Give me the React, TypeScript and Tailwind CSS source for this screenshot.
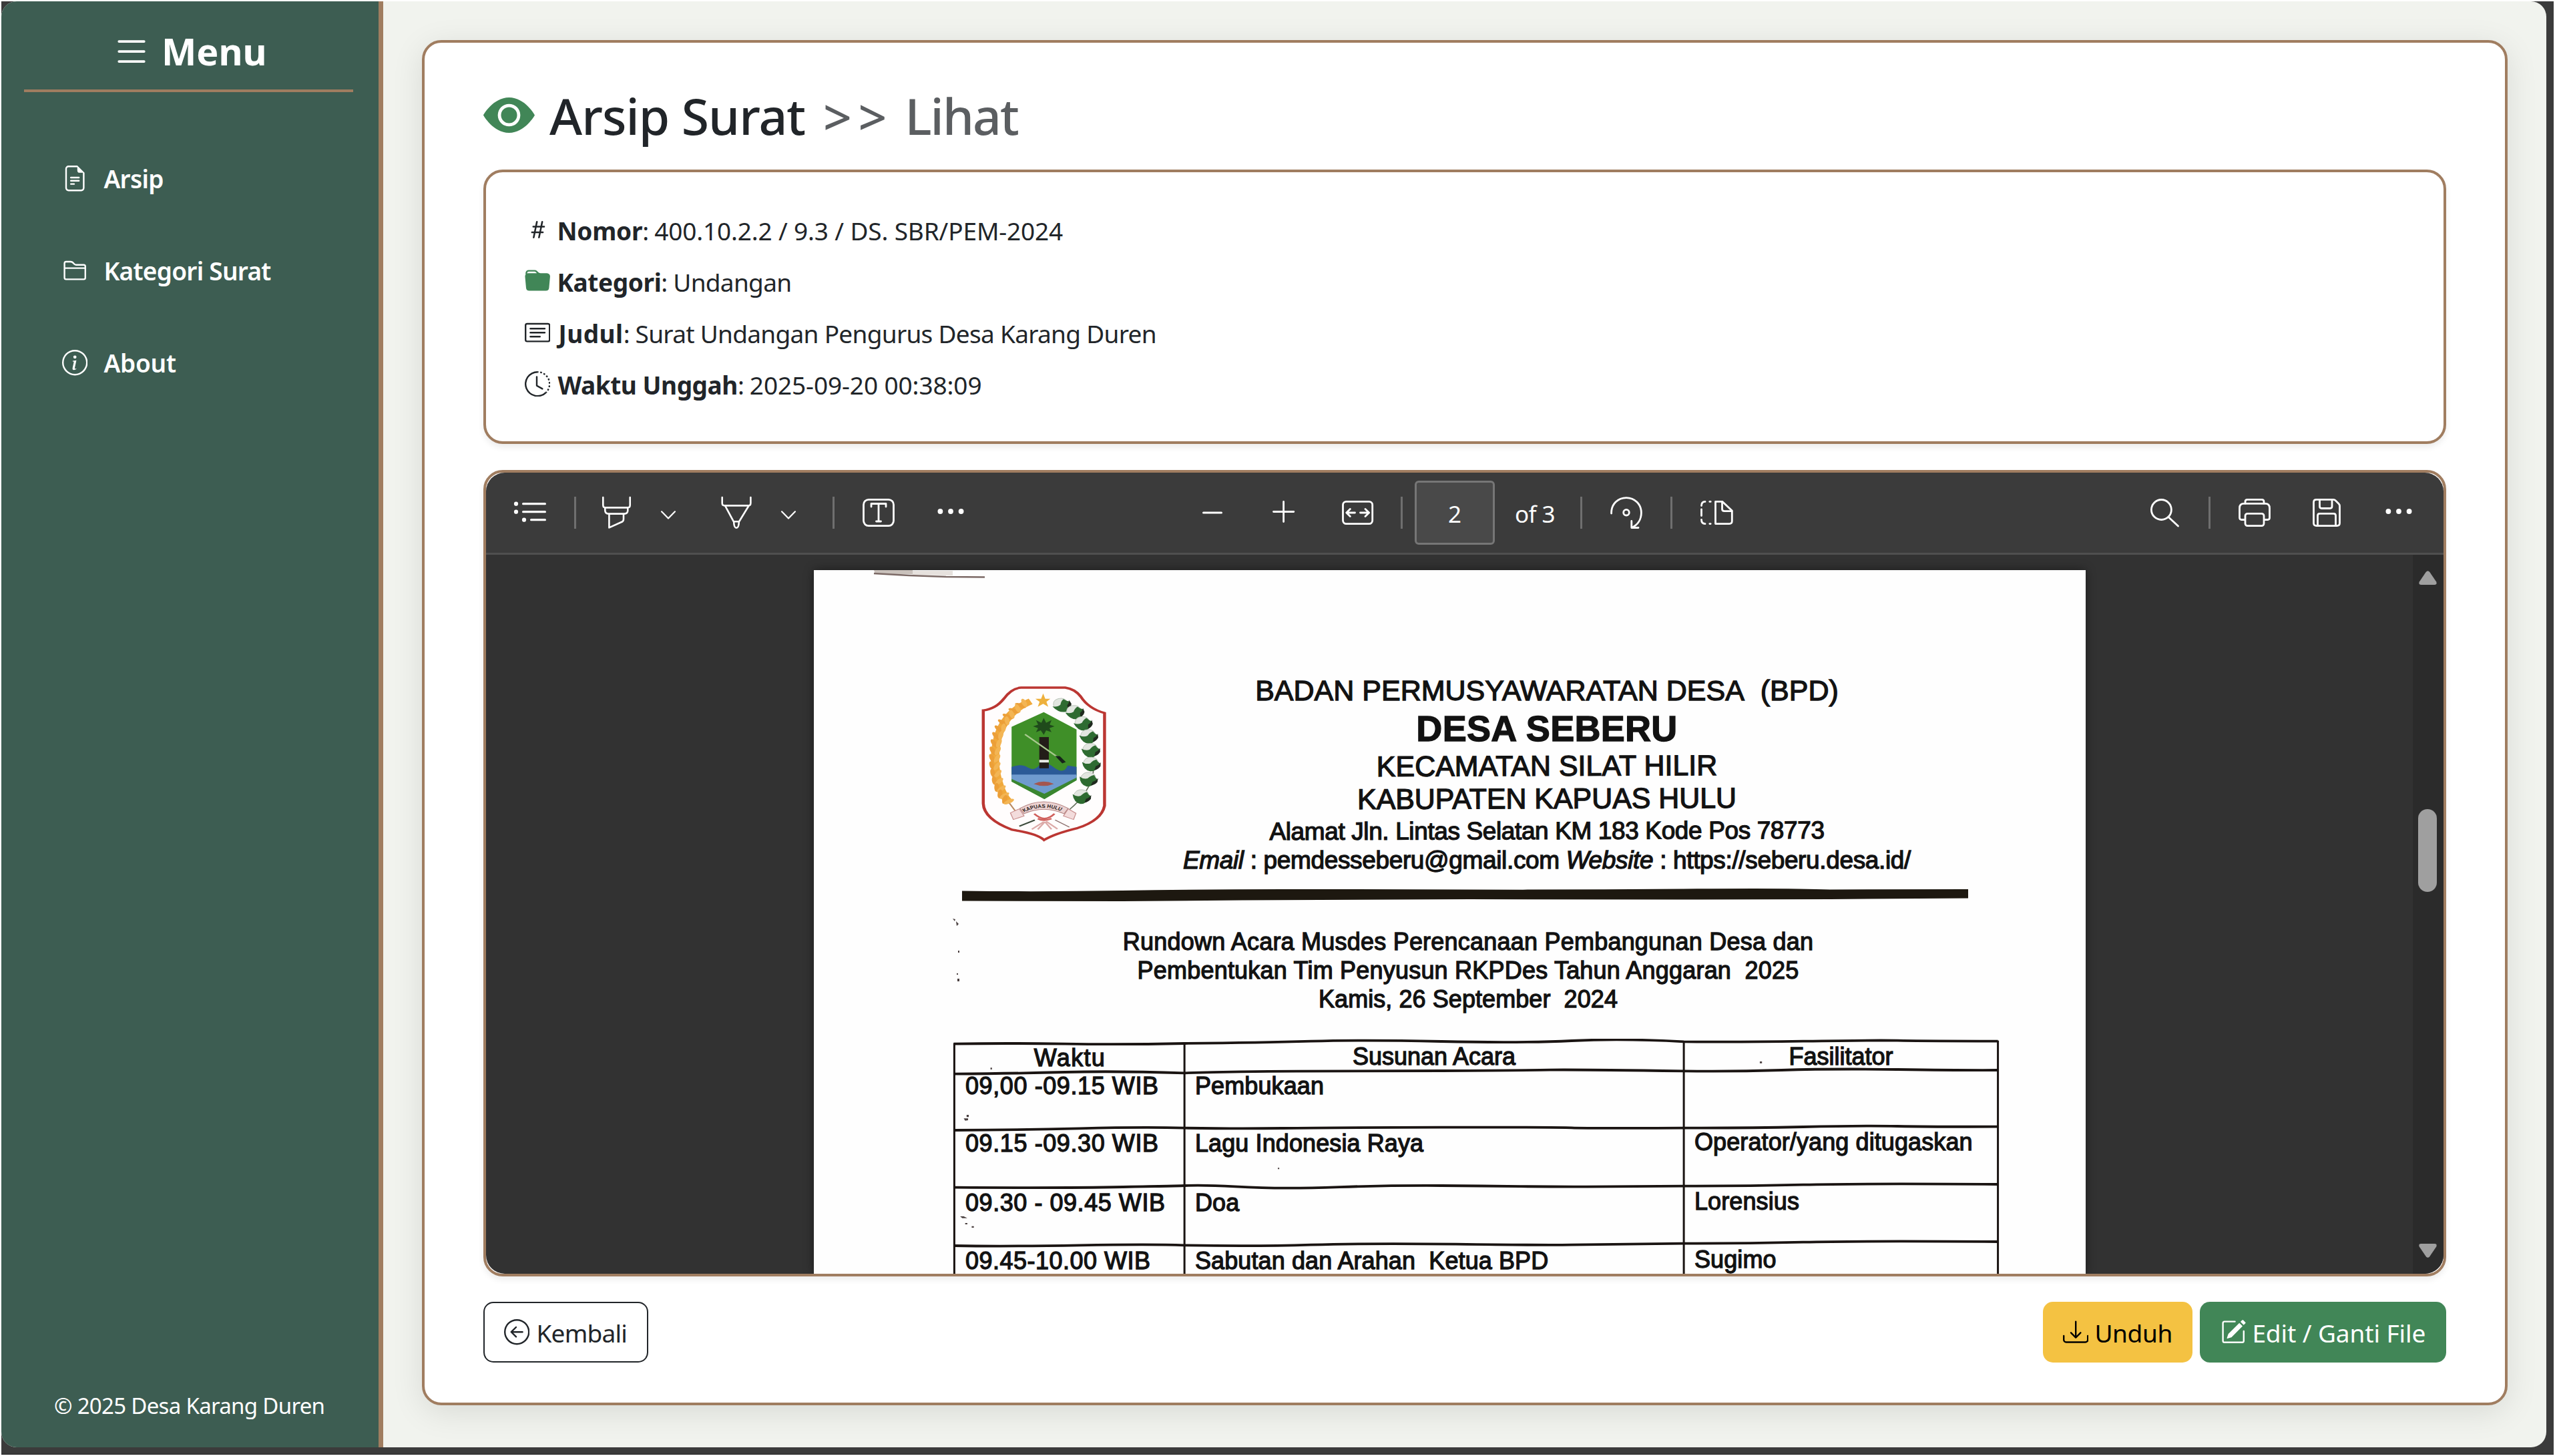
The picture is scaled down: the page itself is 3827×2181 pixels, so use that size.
import React from "react";
import {
  BsArrowLeftCircle,
  BsCardText,
  BsClockHistory,
  BsDownload,
  BsEyeFill,
  BsFileEarmarkText,
  BsFolder2,
  BsFolderFill,
  BsHash,
  BsInfoCircle,
  BsList,
  BsPencilSquare,
} from "react-icons/bs";

type IconProps = { w: number; className?: string; sw?: number; children: React.ReactNode };

function ToolIcon({ w, className = "", sw = 2.8, children }: IconProps) {
  return (
    <svg
      width={w}
      height={48}
      viewBox={`0 0 ${w} 48`}
      fill="none"
      stroke="#fff"
      strokeWidth={sw}
      strokeLinecap="round"
      strokeLinejoin="round"
      className={`shrink-0 overflow-visible ${className}`}
    >
      {children}
    </svg>
  );
}

const Sep = ({ className = "" }: { className?: string }) => (
  <div className={`h-12 w-[3px] shrink-0 bg-[#6f6f6f] ${className}`} />
);

const Chevron = ({ className = "" }: { className?: string }) => (
  <ToolIcon w={22} sw={2.2} className={className}>
    <path d="M1 22.3 11 32.5 21 22.3" />
  </ToolIcon>
);

const Dots = ({ className = "" }: { className?: string }) => (
  <ToolIcon w={40} className={className}>
    <g fill="#fff" stroke="none">
      <circle cx="4.4" cy="22" r="3.9" />
      <circle cx="20" cy="22" r="3.9" />
      <circle cx="35.6" cy="22" r="3.9" />
    </g>
  </ToolIcon>
);

function Toolbar() {
  return (
    <div className="flex h-[120px] shrink-0 items-center bg-[#3b3b3b] text-white">
      <ToolIcon w={48} className="ml-[42px]" sw={3.2}>
        <g fill="#fff" stroke="none">
          <circle cx="3" cy="10.7" r="3.1" />
          <circle cx="3" cy="22.7" r="3.1" />
          <circle cx="15" cy="34.7" r="3.1" />
        </g>
        <path d="M13.6 10.7H46.4M13.6 22.7H46.4M25.6 34.7H46.4" />
      </ToolIcon>
      <Sep className="ml-[42px]" />
      <ToolIcon w={43} className="ml-[39px]" sw={2.6}>
        <path d="M1.3 1V12.5Q1.3 16.4 5 16.4H38Q41.7 16.4 41.7 12.5V1" />
        <path d="M4.3 16.6V20.5Q4.3 25.6 9.6 25.6H33Q38.3 25.6 38.3 20.5V16.6" />
        <path d="M10.4 26V46.4L30 37.5Q32 36.4 32 33.5V26" />
      </ToolIcon>
      <Chevron className="ml-[45px]" />
      <ToolIcon w={46} className="ml-[68px]" sw={2.6}>
        <path d="M1.7 1V9.5Q1.7 13.4 5.5 13.4H40.6Q44.4 13.4 44.4 9.5V1" />
        <path d="M6.3 14 18.9 37.3H27.1L41.3 14" />
        <path d="M19.2 38Q19.4 46.7 23 46.7T26.8 38" />
      </ToolIcon>
      <Chevron className="ml-[44px]" />
      <Sep className="ml-[55px]" />
      <ToolIcon w={48} className="ml-[42px]">
        <rect x="1.5" y="4.4" width="45" height="39.2" rx="7.5" />
        <path d="M13 15V10.5H35V15M24 10.5V37M20.5 37H27.5" />
      </ToolIcon>
      <Dots className="ml-[64px]" />

      <ToolIcon w={30} className="ml-[357px]" sw={3}>
        <path d="M1.5 24H28.5" />
      </ToolIcon>
      <ToolIcon w={34} className="ml-[75px]" sw={2.8}>
        <path d="M1.5 22.5H31.8M16.6 7.4V37.6" />
      </ToolIcon>
      <ToolIcon w={47} className="ml-[70px]">
        <rect x="1.5" y="7.4" width="44.2" height="33.2" rx="5" />
        <path d="M19.5 24H7M12.3 18.5 6.8 24 12.3 29.5M27.5 24H40.5M35 18.5 40.6 24 35 29.5" />
      </ToolIcon>
      <Sep className="ml-[41px]" />
      <div className="ml-[18px] flex h-24 w-[120px] shrink-0 items-center justify-center rounded-[6px] border-[3px] border-[#767676] bg-[#494949] text-[35px]">
        <span className="pt-[5px]">2</span>
      </div>
      <div className="ml-[30px] w-[98px] shrink-0 pt-[5px] text-[35px] tracking-[-0.61px]">of 3</div>
      <Sep />
      <ToolIcon w={48} className="ml-[42px]">
        <path d="M1.6 25C1.2 11 11.5 1.6 24 1.6S46.4 11.5 46.4 24C46.4 34 41 42 33 46" />
        <path d="M31.8 36.5V46.5H42" />
        <circle cx="24" cy="23.7" r="4.3" />
      </ToolIcon>
      <Sep className="ml-[42px]" />
      <ToolIcon w={49} className="ml-[42px]">
        <path d="M22.5 7.4H33L47.3 21V36.6Q47.3 40.6 43.3 40.6H22.5Z" />
        <path d="M32.5 7.6V18.5Q32.5 21.6 36 21.6H47" />
        <path d="M1.5 13.5Q1.5 7.6 7 7.4M1.5 19V28.5M1.5 34.5Q1.5 40.4 7 40.6M13.8 7.4H15.2M13.8 40.6H15.2" />
      </ToolIcon>

      <ToolIcon w={43} className="ml-[625px]">
        <circle cx="16.4" cy="19.5" r="15" />
        <path d="M27 30.5 41.5 44" />
      </ToolIcon>
      <Sep className="ml-[44px]" />
      <ToolIcon w={48} className="ml-[42px]">
        <path d="M10 10V7.5Q10 4.4 13 4.4H35Q38 4.4 38 7.5V10" />
        <path d="M9.5 34.5H4.5Q1.5 34.5 1.5 31.5V17Q1.5 10.4 8 10.4H40Q46.5 10.4 46.5 17V31.5Q46.5 34.5 43.5 34.5H38.5" />
        <rect x="10" y="25.3" width="28" height="18.4" rx="3.4" />
      </ToolIcon>
      <ToolIcon w={42} className="ml-[63px]">
        <path d="M5.5 4.4H31Q33 4.4 34.5 6L39 10.5Q40.5 12 40.5 14V39.6Q40.5 43.6 36.5 43.6H5.5Q1.5 43.6 1.5 39.6V8.4Q1.5 4.4 5.5 4.4Z" />
        <path d="M10.5 5V14.5Q10.5 17.5 13.5 17.5H26Q29 17.5 29 14.5V5" />
        <path d="M7.5 43V28.3Q7.5 25.3 10.5 25.3H31.5Q34.5 25.3 34.5 28.3V43" />
      </ToolIcon>
      <Dots className="ml-[67px]" />
    </div>
  );
}

const grains = [
  [292, 222, 48], [270, 246, 50], [250, 272, 54], [234, 300, 62], [222, 330, 72], [213, 362, 80],
  [207, 396, 86], [203, 430, 90], [201, 464, 92], [201, 498, 96], [204, 532, 100], [209, 566, 106],
  [217, 598, 112], [228, 628, 118], [244, 654, 126],
];

const cotton = [
  [424, 226, -20], [468, 258, -12], [496, 308, -6], [515, 366, 0], [522, 428, 4], [524, 490, 8], [515, 558, 14], [492, 636, 10],
];

function Emblem() {
  return (
    <svg viewBox="150 138 428 707" preserveAspectRatio="none" className="mt-5 ml-[248px] h-[236px] w-[191px] shrink-0">
      <path
        d="M290 150H438Q470 156 490 190Q516 244 570 264V680Q560 745 480 780Q400 806 367 834Q345 806 260 788Q165 740 163 670V252Q205 246 232 200Q258 152 290 150Z"
        fill="#fffdfd"
        stroke="#bb3632"
        strokeWidth="10"
      />
      <path d="M322 212Q238 256 212 372Q190 490 218 590Q230 640 250 664" fill="none" stroke="#f0a93c" strokeWidth="28" />
      <path d="M246 660 274 710" stroke="#b98a62" strokeWidth="5" />
      {grains.map(([x, y, r]) => (
        <g key={y} transform={`translate(${x} ${y}) rotate(${r - 90})`}>
          <ellipse cx="-9" cy="0" rx="8" ry="20" fill="#ec9f38" transform="rotate(-22)" />
          <ellipse cx="9" cy="0" rx="8" ry="20" fill="#f3b554" transform="rotate(22)" />
        </g>
      ))}
      <path d="M364 176 371 200 388 200 375 214 381 236 364 223 346 236 352 214 338 200 357 200Z" fill="#eeb03c" />
      <path d="M404 212Q470 232 508 330Q536 440 532 530Q522 620 450 700" fill="none" stroke="#64705c" strokeWidth="4" />
      {cotton.map(([x, y, r]) => (
        <g key={y} transform={`translate(${x} ${y}) rotate(${r})`}>
          <path d="M-26 4Q-24 -28 0 -28Q24 -28 26 4L0 14Z" fill="#e2e6e0" stroke="#b4beb3" strokeWidth="2" />
          <path d="M-30 -2Q-14 8 -2 0Q6 -16 16 -20Q22 -8 32 -4Q26 32 4 36Q-20 34 -30 -2Z" fill="#2e6b31" />
          <path d="M18 10Q30 2 32 -10L34 8Q28 24 16 28Z" fill="#20291e" />
        </g>
      ))}
      <path d="M366 260 476 338V566L368 650 258 572V326Z" fill="#3f8f28" />
      <path d="M258 506Q290 490 312 508T350 500T400 508T446 500L476 506V545H258Z" fill="#2b5a97" />
      <path d="M258 540H476V562L368 636 258 566Z" fill="#6f9bcf" />
      <path d="M258 560 368 626 476 554V566L368 650 258 572Z" fill="#3a8630" />
      <path d="M332 582Q366 562 400 582Q366 600 332 582Z" fill="#a4564f" />
      <rect x="351" y="372" width="32" height="140" fill="#231d18" />
      <rect x="351" y="474" width="32" height="12" fill="#e8ebe4" />
      <path
        d="M366 286 374 308 392 296 386 316 402 324 385 332 392 350 374 342 366 362 356 342 340 350 347 332 330 324 347 316 340 296 358 308Z"
        fill="#1f4a1b"
      />
      <path d="M303 360 430 478" stroke="#a9c98f" strokeWidth="6" />
      <path d="M404 456 420 458 440 484 428 490Z" fill="#17241a" />
      <path d="M254 712 284 694 300 726 264 742ZM474 714 448 694 432 726 466 742Z" fill="#f3dcdc" stroke="#c98f8f" strokeWidth="3" />
      <path d="M286 692Q366 632 448 692L434 716Q366 676 300 716Z" fill="#ecd3d2" stroke="#b58684" strokeWidth="3" />
      <path id="ribbon" d="M300 710Q366 668 434 710" fill="none" />
      <text fontFamily="Liberation Sans" fontSize="23" fontWeight="700" fill="#2a2020">
        <textPath href="#ribbon" textLength="130" lengthAdjust="spacingAndGlyphs">
          KAPUAS HULU
        </textPath>
      </text>
      <path d="M366 752 326 786M370 752 346 786M370 752 392 786M374 750 412 784" stroke="#dcaaa8" strokeWidth="6" />
      <path d="M334 716Q352 736 368 738Q386 736 402 716M346 738Q366 752 392 738" stroke="#d0605c" strokeWidth="7" fill="none" />
      <path d="M284 772 336 744" stroke="#3c4b3c" strokeWidth="6" />
      <path d="M452 776 404 744" stroke="#8b6f6d" strokeWidth="4" />
    </svg>
  );
}

const rows = [
  { time: "09,00 -09.15 WIB", act: "Pembukaan", who: "", cls: "h-[85px]", ls: "tracking-[0.59px]" },
  { time: "09.15 -09.30 WIB", act: "Lagu Indonesia Raya", who: "Operator/yang ditugaskan", cls: "h-[87px] pt-px", ls: "tracking-[0.59px]" },
  { time: "09.30 - 09.45 WIB", act: "Doa", who: "Lorensius", cls: "h-[88px] pt-[3px]", ls: "tracking-[0.55px]" },
  { time: "09.45-10.00 WIB", act: "Sabutan dan Arahan\u00a0 Ketua BPD", who: "Sugimo", cls: "h-[88px] pt-[2px]", ls: "tracking-[0.49px]" },
];

const cols = "grid grid-cols-[345px_748px_471px]";

function ScanPage() {
  return (
    <div className="relative mt-[23px] ml-[491px] h-[1054px] w-[1905px] shrink-0 overflow-hidden bg-[#fefefe] font-['Liberation_Sans',Arial,sans-serif] text-[#121212] shadow-[0_0_14px_rgba(0,0,0,0.45)] [-webkit-text-stroke:1.3px_#121212]">
      <svg viewBox="0 0 200 16" className="absolute top-0 left-[88px] h-4 w-[200px]">
        <path d="M2 0H60V6L4 6Z" fill="#c9c1bb" />
        <path d="M60 1H120V8L60 7Z" fill="#e6e1dd" />
        <path d="M2 5 55 8 110 10 168 10.500" stroke="#7c6a66" strokeWidth="2.500" fill="none" />
      </svg>
      <svg viewBox="0 0 30 110" className="absolute top-[516px] left-[206px] h-[110px] w-[30px]" fill="#4a4040">
        <path d="M2 6 6 7 5 10ZM7 10 11 14 8 17ZM10 54H12V57H10ZM9 96H12V100H9ZM8 88H10V90H8Z" />
      </svg>

      <div className="flex h-[456px] items-start pt-[152px]">
        <Emblem />
        <div className="ml-[42px] w-[1234px] text-center whitespace-nowrap">
          <p className="text-[43px] leading-[56px]">BADAN PERMUSYAWARATAN DESA&nbsp; (BPD)</p>
          <p className="-mt-[2px] mb-[2px] text-[54px] leading-[62px] font-bold tracking-[0.29px]">DESA SEBERU</p>
          <p className="-rotate-[0.2deg] text-[43px] leading-[46px]">KECAMATAN SILAT HILIR</p>
          <p className="-rotate-[0.2deg] text-[43px] leading-[53px] tracking-[-0.07px]">KABUPATEN KAPUAS HULU</p>
          <p className="-rotate-[0.15deg] text-[37px] leading-[43.5px] tracking-[-0.38px]">
            Alamat Jln. Lintas Selatan KM 183 Kode Pos 78773
          </p>
          <p className="text-[37px] leading-[43.5px] tracking-[-0.35px]">
            <i>Email</i> : pemdesseberu@gmail.com <i>Website</i> : https://seberu.desa.id/
          </p>
        </div>
      </div>

      <svg viewBox="0 0 1508 24" className="mt-[18px] ml-[222px] block h-6 w-[1508px]">
        <path
          d="M0 6.500Q120 8 240 6T480 4T760 4.500T1080 3.500T1300 4.500L1507 4V17.500L1300 19L1080 19.500L760 19L420 20.500L240 22L0 21.500Z"
          fill="#1d1810"
        />
      </svg>

      <div className="mt-[37px] pl-[55px] text-center text-[36px] leading-[43px] whitespace-nowrap">
        <p className="tracking-[0.22px]">Rundown Acara Musdes Perencanaan Pembangunan Desa dan</p>
        <p className="tracking-[0.21px]">Pembentukan Tim Penyusun RKPDes Tahun Anggaran&nbsp; 2025</p>
        <p className="tracking-[0.07px]">Kamis, 26 September&nbsp; 2024</p>
      </div>

      <div className="relative mt-[43px] ml-[210px] w-[1564px] text-[36px] leading-[43px] whitespace-nowrap">
        <div className={`${cols} h-[44px] text-center`}>
          <span className="pt-[2px] pl-[2px] tracking-[1.33px]">Waktu</span>
          <span>Susunan Acara</span>
          <span>Fasilitator</span>
        </div>
        {rows.map((r) => (
          <div key={r.time} className={`${cols} ${r.cls}`}>
            <span className={`pl-[17px] ${r.ls}`}>{r.time}</span>
            <span className="pl-4 tracking-[0.1px]">{r.act}</span>
            <span className="-mt-[2px] pl-4 tracking-[0.1px]">{r.who}</span>
          </div>
        ))}
        <svg
          viewBox="22 108 1452 1056"
          preserveAspectRatio="none"
          className="absolute -top-[5px] -left-[5px] h-[352px] w-[1574px]"
          fill="none"
          stroke="#1a1412"
          strokeWidth="3"
        >
          <g strokeWidth="3">
            <path vectorEffect="non-scaling-stroke" d="M27 128V1170M345 128V1170M1035 118V1170M1469 116V1170" />
          </g>
          <g strokeWidth="3.800">
            <path vectorEffect="non-scaling-stroke" d="M26 131Q100 127 180 131T345 129Q450 126 520 119T700 120T880 117T1035 121Q1100 124 1200 119T1330 116T1469 119" />
            <path vectorEffect="non-scaling-stroke" d="M27 266Q110 264 180 258T345 262Q420 254 500 254T700 252T850 248T1035 253Q1100 256 1170 249T1330 246T1469 249" />
            <path vectorEffect="non-scaling-stroke" d="M27 519Q110 518 200 511T345 509Q420 513 480 510T700 506T880 508T1035 509Q1120 510 1200 504T1330 501T1469 503" />
            <path vectorEffect="non-scaling-stroke" d="M27 776Q180 779 260 774T345 768C400 762 420 780 490 779S580 766 700 768S820 774 900 773T1035 770Q1120 770 1200 764T1469 762" />
            <path vectorEffect="non-scaling-stroke" d="M27 1038Q100 1042 200 1036T345 1036Q440 1042 520 1034T720 1031T880 1034T1035 1028Q1120 1028 1200 1022T1469 1020" />
          </g>
          <path d="M40 466H46V474L42 476ZM44 450H47V460H44ZM35 906H40L45 914H38ZM42 936H45V942H42ZM51 950H54V957H51ZM77 238H79V246H77ZM1140 210H1143V218H1140ZM474 688H476V694H474Z" fill="#4a4040" stroke="none" />
        </svg>
      </div>
    </div>
  );
}

function Viewer() {
  return (
    <section className="mt-[39px] h-[1208px] rounded-[29px] border-4 border-[#a07d60] bg-white shadow-[0_5px_10px_rgba(0,0,0,0.075)]">
      <div className="flex h-full flex-col overflow-hidden rounded-[28px]">
        <Toolbar />
        <div className="h-[3px] shrink-0 bg-[#4f4f4f]" />
        <div className="flex min-h-0 flex-1 justify-between bg-[#323232]">
          <ScanPage />
          <div className="flex w-[46px] shrink-0 flex-col items-center bg-[#2b2b2b] pt-6 pr-[2px] pb-6">
            <svg width="27" height="21" viewBox="0 0 27 21" fill="#9f9f9f">
              <path d="M10.800 1.800Q13.500 -1.400 16.200 1.800L26.200 16.500Q27.800 21 23.500 21H3.500Q-.8 21 .8 16.500Z" />
            </svg>
            <div className="mt-[336px] h-[124px] w-[28px] rounded-full bg-[#9f9f9f]" />
            <svg width="27" height="21" viewBox="0 0 27 21" fill="#9f9f9f" className="mt-auto">
              <path d="M10.800 19.200Q13.500 22.400 16.200 19.200L26.200 4.500Q27.800 0 23.500 0H3.500Q-.8 0 .8 4.500Z" />
            </svg>
          </div>
        </div>
      </div>
    </section>
  );
}

const nav = [
  { label: "Arsip", Icon: BsFileEarmarkText, ls: "tracking-[-0.7px]" },
  { label: "Kategori Surat", Icon: BsFolder2, ls: "tracking-[-0.72px]" },
  { label: "About", Icon: BsInfoCircle, ls: "tracking-[-0.24px]" },
];

const info = [
  { label: "Nomor", value: "400.10.2.2 / 9.3 / DS. SBR/PEM-2024", Icon: BsHash, a: "tracking-[-0.23px]", b: "tracking-[-0.15px]", c: "" },
  { label: "Kategori", value: "Undangan", Icon: BsFolderFill, a: "tracking-[-0.38px]", b: "tracking-[-0.7px]", c: "text-[#418657]" },
  { label: "Judul", value: "Surat Undangan Pengurus Desa Karang Duren", Icon: BsCardText, a: "ml-[2px] tracking-[0.5px]", b: "tracking-[-0.71px]", c: "" },
  { label: "Waktu Unggah", value: "2025-09-20 00:38:09", Icon: BsClockHistory, a: "ml-px tracking-[-0.45px]", b: "tracking-[-0.1px]", c: "" },
];

export default function App() {
  return (
    <div className="h-[2181px] w-[3827px] overflow-hidden bg-white p-[2px] font-['Noto_Sans','Segoe_UI',sans-serif] whitespace-nowrap text-[#212529]">
      <div className="h-[2177px] border-b border-[#1d1d1d] bg-[#3b3b3b]">
        <div className="flex h-[2166px] w-[3812px] overflow-hidden rounded-[23px] bg-[#f1f3ee]">
          <aside className="flex w-[572px] shrink-0 flex-col border-r-[7px] border-[#a07d60] bg-[#3d5d52] pr-[38px] pl-[34px] text-white">
            <div className="flex h-[136px] items-center gap-[15px] border-b-4 border-[#a07d60] pt-[17px] pl-[131px]">
              <BsList size={60} />
              <span className="text-[55.500px] leading-[80px] font-bold">Menu</span>
            </div>
            <nav className="mt-[60px]">
              {nav.map(({ label, Icon, ls }) => (
                <a key={label} className="flex h-[138px] items-center gap-6 pl-[57px]">
                  <Icon size={38.4} className="mt-px" />
                  <span className={`pt-[2px] text-[37px] font-semibold ${ls}`}>{label}</span>
                </a>
              ))}
            </nav>
            <div className="mt-auto mb-[37px] pl-[45px] text-[33px] leading-[50px] tracking-[-0.69px]">© 2025 Desa Karang Duren</div>
          </aside>

          <main className="flex-1 px-[58px] pt-[58px]">
            <div className="h-[2045px] rounded-[29px] border-4 border-[#a07d60] bg-white px-[88px] pt-[62px] shadow-[0_10px_48px_rgba(0,0,0,0.1)]">
              <h1 className="mb-9 flex h-[92px] items-center text-[75px] leading-[92px] font-medium">
                <BsEyeFill size={77} className="mr-[22px] text-[#418657]" />
                <span className="w-[410px] pt-[2px] tracking-[-0.96px]">Arsip Surat</span>
                <span className="w-[122.500px] pt-[3px] tracking-[9.7px] text-[#5b5e61]">&gt;&gt;</span>
                <span className="pt-[2px] tracking-[-1.93px] text-[#5b5e61]">Lihat</span>
              </h1>

              <section className="h-[411px] rounded-[29px] border-4 border-[#a07d60] bg-white pt-12 pl-[58px] shadow-[0_5px_10px_rgba(0,0,0,0.075)]">
                {info.map(({ label, value, Icon, a, b, c }) => (
                  <div key={label} className="flex h-[76.800px] items-center text-[37px]">
                    <Icon size={38.4} className={`mr-[10px] ${c}`} />
                    <div className="flex pt-[3px]">
                      <b className={`font-bold ${a}`}>{label}</b>
                      <span className="tracking-[-0.8px] whitespace-pre">: </span>
                      <span className={b}>{value}</span>
                    </div>
                  </div>
                ))}
              </section>

              <Viewer />

              <div className="mt-[38px] flex h-[91px] items-stretch text-[37px]">
                <button className="flex w-[247px] items-center gap-[10px] rounded-[15px] border-2 border-[#212529] pl-[29px]">
                  <BsArrowLeftCircle size={38.4} />
                  <span className="pt-[2px] tracking-[-0.74px]">Kembali</span>
                </button>
                <button className="ml-auto flex w-[224px] items-center gap-[9px] rounded-[15px] bg-[#f4c242] pl-[30px] text-black">
                  <BsDownload size={38.4} />
                  <span className="pt-[2px] tracking-[-0.38px]">Unduh</span>
                </button>
                <button className="ml-[11px] flex w-[369px] items-center gap-[9px] rounded-[15px] bg-[#418657] pl-[31px] text-white">
                  <BsPencilSquare size={38.4} />
                  <span className="pt-[2px] tracking-[-0.1px]">Edit / Ganti File</span>
                </button>
              </div>
            </div>
          </main>
        </div>
      </div>
    </div>
  );
}
